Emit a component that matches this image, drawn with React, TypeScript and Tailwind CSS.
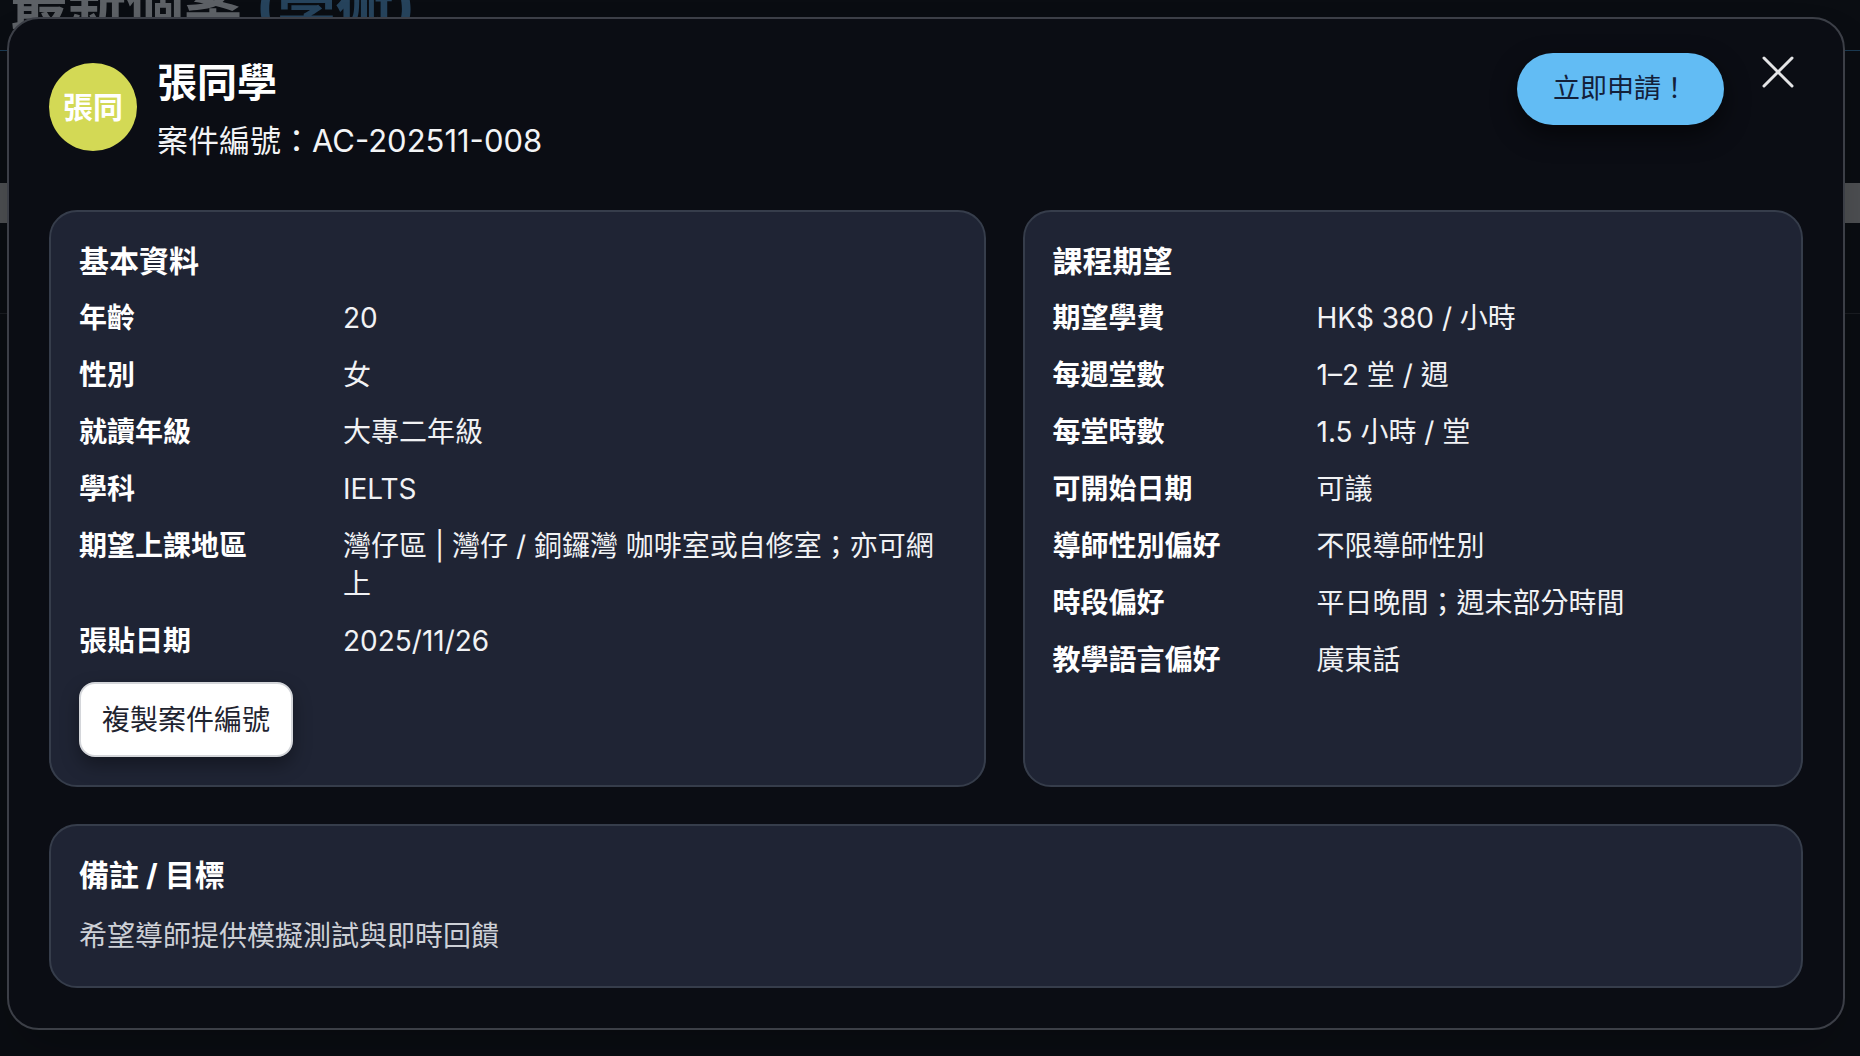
const basicInfo: [string, string][] = [
  ['年齡', '20'],
  ['性別', '女'],
  ['就讀年級', '大專二年級'],
  ['學科', 'IELTS'],
  ['期望上課地區', '灣仔區 | 灣仔 / 銅鑼灣 咖啡室或自修室；亦可網上'],
  ['張貼日期', '2025/11/26'],
];

const expectations: [string, string][] = [
  ['期望學費', 'HK$ 380 / 小時'],
  ['每週堂數', '1–2 堂 / 週'],
  ['每堂時數', '1.5 小時 / 堂'],
  ['可開始日期', '可議'],
  ['導師性別偏好', '不限導師性別'],
  ['時段偏好', '平日晚間；週末部分時間'],
  ['教學語言偏好', '廣東話'],
];

function InfoRow({ label, value }: { label: string; value: string }) {
  return (
    <div className="flex text-[28px] leading-[38px]">
      <div className="w-[264px] shrink-0 font-bold text-white">{label}</div>
      <div className="flex-1 text-[#f1f2f4]">{value}</div>
    </div>
  );
}

function Card({ title, children }: { title: string; children: React.ReactNode }) {
  return (
    <div className="h-full rounded-[28px] border-2 border-[#363d4b] bg-[#1f2434] px-[28px] pb-[28px] pt-[30px]">
      <h3 className="text-[30px] font-bold leading-[38px] text-white">{title}</h3>
      {children}
    </div>
  );
}

export default function App() {
  return (
    <div className="relative h-[1056px] w-full overflow-hidden bg-[#0a0d12] font-[Inter,'Noto_Sans_CJK_TC',sans-serif]">
      {/* page behind the dialog */}
      <div className="flex flex-col">
        <h1 className="-mt-[30px] pl-[10px] text-[58px] font-bold leading-[70px] text-[#5d6166]">
          最新個案 <span className="text-[#26435c]">(學術)</span>
        </h1>
        <div className="mt-[10px] h-[1px] bg-[#1b3a52]" />
        <div className="mt-[132px] h-[40px] bg-[#4d4f52]" />
        <div className="mt-[90px] h-[1px] bg-[#1a1d22]" />
      </div>

      {/* dialog */}
      <div className="absolute inset-0 pl-[7px] pt-[17px]">
        <div className="relative w-[1838px] rounded-[32px] border-2 border-[#3c3f47] bg-[#0b0d14] px-[40px] pb-[40px] pt-[44px] shadow-2xl">
          <button className="absolute right-[49px] top-[37px]">
            <svg width="32" height="32" viewBox="0 0 32 32" fill="none" stroke="#e4e4e6" strokeWidth="3" strokeLinecap="round">
              <path d="M2 2L30 30M30 2L2 30" />
            </svg>
          </button>

          <div className="mb-[59px] flex h-[88px] items-start justify-between">
            <div className="flex items-start gap-[20px]">
              <div className="flex h-[88px] w-[88px] shrink-0 items-center justify-center rounded-full bg-[#d3d955] text-[30px] font-bold text-white">
                張同
              </div>
              <div className="-mt-[4px] flex flex-col">
                <div className="text-[40px] font-bold leading-[48px] text-white">張同學</div>
                <div className="mt-[12px] text-[31px] leading-[40px] text-[#f3f4f6]">
                  案件編號<span className="font-['Noto_Sans_CJK_TC']">：</span>AC-202511-008
                </div>
              </div>
            </div>
            <button className="-mt-[10px] mr-[79px] h-[72px] w-[207px] rounded-full bg-[#62bcf4] text-[27px] text-[#13203a] shadow-[0_10px_24px_rgba(0,0,0,0.55)]">
              立即申請！
            </button>
          </div>

          <div className="grid grid-cols-[6fr_5fr] gap-[37px]">
            <Card title="基本資料">
              <div className="mt-[19px] flex flex-col gap-[19px]">
                {basicInfo.map(([l, v]) => (
                  <InfoRow key={l} label={l} value={v} />
                ))}
              </div>
              <button className="mt-[22px] h-[75px] w-[214px] rounded-[16px] border-2 border-[#d4d6da] bg-white text-[28px] text-[#1f2430] shadow-[0_8px_18px_rgba(0,0,0,0.35)]">
                複製案件編號
              </button>
            </Card>
            <Card title="課程期望">
              <div className="mt-[19px] flex flex-col gap-[19px]">
                {expectations.map(([l, v]) => (
                  <InfoRow key={l} label={l} value={v} />
                ))}
              </div>
            </Card>
          </div>

          <div className="mt-[37px] rounded-[28px] border-2 border-[#363d4b] bg-[#1f2434] px-[28px] pb-[31px] pt-[30px]">
            <h3 className="text-[30px] font-bold leading-[38px] text-white">備註 / 目標</h3>
            <p className="mt-[23px] text-[28px] leading-[38px] text-[#cdd0d6]">希望導師提供模擬測試與即時回饋</p>
          </div>
        </div>
      </div>
    </div>
  );
}
